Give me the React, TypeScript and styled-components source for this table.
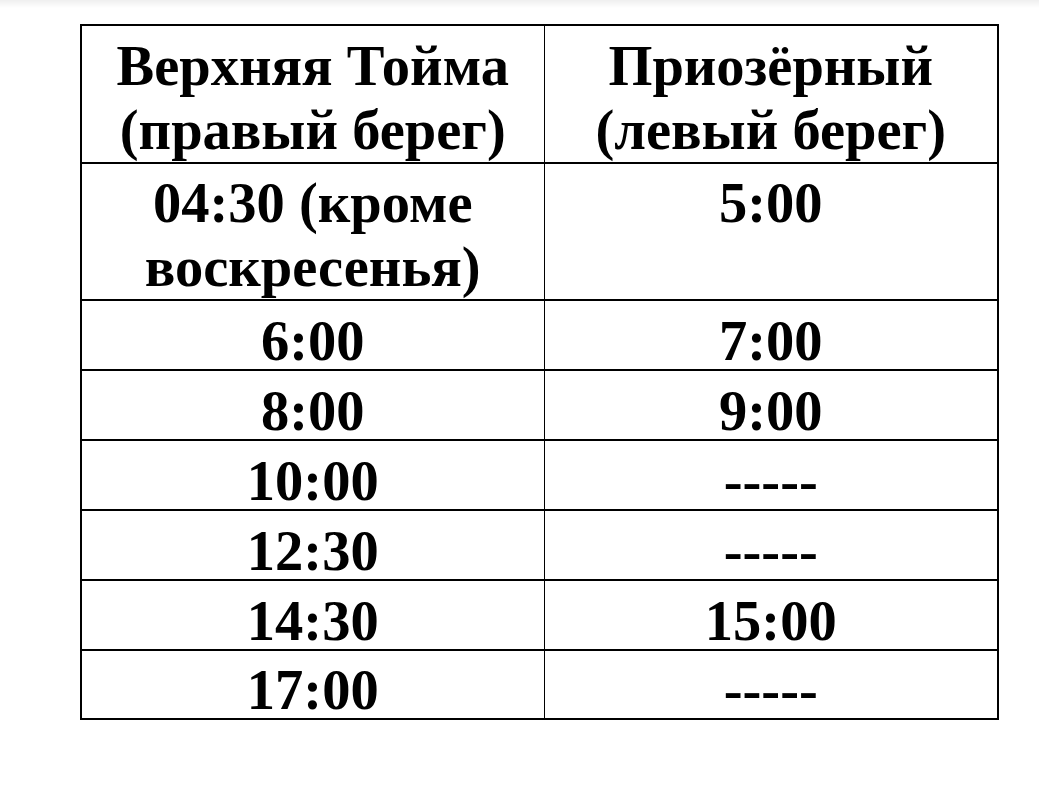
import React from "react";
import styled, { createGlobalStyle } from "styled-components";

const Global = createGlobalStyle`
  html, body { margin: 0; padding: 0; background: #ffffff; }
  body { font-family: "Liberation Serif", "Times New Roman", serif; }
`;

const Page = styled.div`
  width: 1039px;
  height: 804px;
  background: #ffffff;
  display: flex;
  flex-direction: column;
`;

const TopBand = styled.div`
  height: 8px;
  background: linear-gradient(#efefef, #ffffff);
`;

const Wrap = styled.div`
  padding: 16px 0 0 80px;
`;

const Table = styled.table`
  border-collapse: collapse;
  table-layout: fixed;
  width: 917px;
  border: 2px solid #000;
`;

const Row = styled.tr<{ $h: number }>`
  height: ${(p) => p.$h}px;
  border-bottom: 2px solid #000;
`;

const Cell = styled.td<{ $pt: number; $lh: number }>`
  border-left: 1.5px solid #000;
  border-right: 1.5px solid #000;
  padding: ${(p) => p.$pt}px 4px 0 4px;
  vertical-align: top;
  text-align: center;
  font-family: "Liberation Serif", "Times New Roman", serif;
  font-weight: 700;
  font-size: 56.5px;
  line-height: ${(p) => p.$lh}px;
  color: #000;
  white-space: nowrap;
`;

const rows: { l: React.ReactNode; r: React.ReactNode; h: number; pt: number; lh: number }[] = [
  { l: <>Верхняя Тойма<br />(правый берег)</>, r: <>Приозёрный<br />(левый берег)</>, h: 138, pt: 8, lh: 64 },
  { l: <>04:30 (кроме<br />воскресенья)</>, r: "5:00", h: 137, pt: 7, lh: 64 },
  { l: "6:00", r: "7:00", h: 70, pt: 12, lh: 56 },
  { l: "8:00", r: "9:00", h: 70, pt: 12, lh: 56 },
  { l: "10:00", r: "-----", h: 70, pt: 12, lh: 56 },
  { l: "12:30", r: "-----", h: 70, pt: 12, lh: 56 },
  { l: "14:30", r: "15:00", h: 70, pt: 12, lh: 56 },
  { l: "17:00", r: "-----", h: 68, pt: 11, lh: 56 },
];

export default function App() {
  return (
    <Page>
      <Global />
      <TopBand />
      <Wrap>
        <Table>
          <colgroup>
            <col style={{ width: 463 }} />
            <col style={{ width: 454 }} />
          </colgroup>
          <tbody>
            {rows.map((r, i) => (
              <Row key={i} $h={r.h}>
                <Cell $pt={r.pt} $lh={r.lh}>{r.l}</Cell>
                <Cell $pt={r.pt} $lh={r.lh}>{r.r}</Cell>
              </Row>
            ))}
          </tbody>
        </Table>
      </Wrap>
    </Page>
  );
}
